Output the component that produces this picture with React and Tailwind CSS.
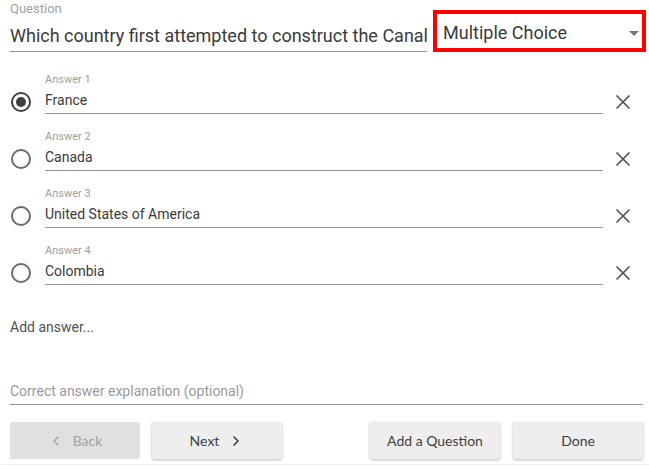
import { ChevronLeft, ChevronRight, X } from "lucide-react";

const answers = [
  { label: "Answer 1", value: "France", checked: true },
  { label: "Answer 2", value: "Canada" },
  { label: "Answer 3", value: "United States of America" },
  { label: "Answer 4", value: "Colombia" }
];

const Radio = ({ checked }) => (
  <svg width="22" height="22" viewBox="0 0 22 22">
    <circle cx="11" cy="11" r="9" fill="none" stroke={checked ? "#404040" : "#6b6b6b"} strokeWidth="2" />
    {checked && <circle cx="11" cy="11" r="5" fill="#404040" />}
  </svg>
);

const AnswerRow = ({ answer }) => (
  <div className="flex h-[57px]">
    <div className="w-[35px] pt-[25px]">
      <Radio checked={answer.checked} />
    </div>
    <div className="flex-1">
      <div className="pt-[7px] text-[11px] leading-[14px] text-[#a0a0a0]">{answer.label}</div>
      <div className="mt-[3px] border-b border-[#949494] pb-[3px] text-[14px] leading-[20px] text-[#3a3a3a]">
        {answer.value}
      </div>
    </div>
    <div className="flex w-[40px] justify-center pt-[24px] text-[#555555]">
      <X size={24} strokeWidth={1.7} />
    </div>
  </div>
);

const Button = ({ children, disabled }) => (
  <button
    type="button"
    disabled={disabled}
    className={
      disabled
        ? "flex h-[37px] w-[130px] items-center justify-center gap-[9px] rounded-[2px] bg-[#e0e0e0] text-[14px] text-[#a2a2a2]"
        : "flex h-[37px] w-[130px] items-center justify-center gap-[9px] rounded-[2px] bg-[#eeeeee] text-[14px] text-[#3f3f3f] shadow-[0_1px_3px_rgba(0,0,0,0.28)]"
    }
  >
    {children}
  </button>
);

export default function App() {
  return (
    <div className="w-[649px] bg-white font-['Roboto',sans-serif]">
      <div className="pl-[10px] pr-[6px]">
        <div className="flex gap-[6px]">
          <div className="flex-1 overflow-hidden">
            <div className="mt-[1px] text-[13px] leading-[16px] text-[#a0a0a0]">Question</div>
            <div className="whitespace-nowrap overflow-hidden border-b border-[#949494] pb-[3px] pt-[7px] text-[18px] leading-[24px] text-[#3a3a3a]">
              Which country first attempted to construct the Canal
            </div>
          </div>
          <div className="mr-[-3px] mt-[10px] flex h-[42px] w-[213px] items-center border-4 border-[#ff0000] pl-[6px] pr-[3px] pt-[4px]">
            <span className="flex-1 text-[18px] leading-[24px] text-[#3a3a3a]">Multiple Choice</span>
            <svg width="10" height="5" viewBox="0 0 10 5" className="mt-[1px]">
              <path d="M0 0h10L5 5z" fill="#757575" />
            </svg>
          </div>
        </div>

        <div className="mt-[14px]">
          {answers.map((answer) => (
            <AnswerRow key={answer.label} answer={answer} />
          ))}
        </div>

        <div className="mt-[23px] text-[14px] leading-[20px] text-[#505050]">Add answer...</div>

        <div className="mt-[44px] border-b border-[#949494] pb-[3px] text-[14px] leading-[20px] text-[#9a9a9a]">
          Correct answer explanation (optional)
        </div>

        <div className="mt-[17px] flex justify-between font-['Lato',sans-serif]">
          <div className="flex gap-[12px]">
            <Button disabled>
              <ChevronLeft size={16} strokeWidth={2} />
              <span>Back</span>
            </Button>
            <Button>
              <span>Next</span>
              <ChevronRight size={16} strokeWidth={2.5} />
            </Button>
          </div>
          <div className="flex gap-[13px]">
            <Button>Add a Question</Button>
            <Button>Done</Button>
          </div>
        </div>
      </div>
      <div className="ml-[2px] mt-[5px] h-[6px] border-t border-[#eeeeee]" />
    </div>
  );
}
